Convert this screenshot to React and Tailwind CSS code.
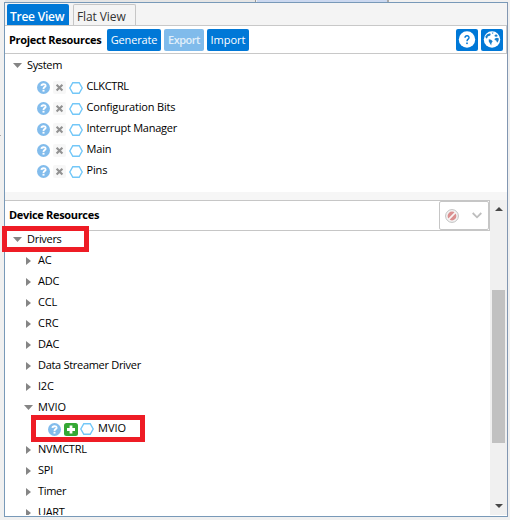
import React from "react";

function Help() {
  return (
    <svg className="shrink-0" width="13" height="13" viewBox="0 0 13 13">
      <circle cx="6.5" cy="6.5" r="6.5" fill="#82bcec" />
      <path d="M4.4 4.9C4.5 2.6 8.7 2.6 8.6 4.9C8.5 6.1 6.5 6.2 6.5 7.9" fill="none" stroke="#fff" strokeWidth="1.9" />
      <rect x="5.5" y="8.8" width="2" height="1.8" fill="#fff" />
    </svg>
  );
}

function Hexagon() {
  return (
    <svg className="shrink-0" width="14" height="12" viewBox="0 0 14 12">
      <path d="M3.8 .7H10.2L13.2 6L10.2 11.3H3.8L.8 6Z" fill="#fff" stroke="#72c7f8" strokeWidth="1.4" />
    </svg>
  );
}

function Remove() {
  return (
    <svg className="shrink-0" width="13" height="13" viewBox="0 0 13 13">
      <rect width="13" height="13" rx="2" fill="#f7f7f7" />
      <path d="M3.6 3.8L9.4 9.6M9.4 3.8L3.6 9.6" stroke="#929292" strokeWidth="2.1" />
    </svg>
  );
}

function Add() {
  return (
    <svg className="shrink-0" width="14" height="13" viewBox="0 0 14 13">
      <rect width="14" height="13" rx="2.5" fill="#34a834" />
      <path d="M7 2.5V10.5M3 6.5H11" stroke="#fff" strokeWidth="2.8" />
    </svg>
  );
}

function Arrow({ open }) {
  return open ? (
    <svg className="shrink-0" width="9" height="5" viewBox="0 0 9 5"><path d="M0 0H9L4.5 5Z" fill="#858585" /></svg>
  ) : (
    <svg className="shrink-0" width="5" height="8" viewBox="0 0 5 8"><path d="M0 0L5 4L0 8Z" fill="#858585" /></svg>
  );
}

const systemItems = [
  ["CLKCTRL", "tracking-[-0.4px]"],
  ["Configuration Bits", "tracking-[-0.18px]"],
  ["Interrupt Manager", "tracking-[-0.25px]"],
  ["Main", "tracking-[-0.15px]"],
  ["Pins", "tracking-[-0.15px]"],
];

const drivers = [
  ["AC", "tracking-[-0.2px]"],
  ["ADC", "tracking-[-0.2px]"],
  ["CCL", "tracking-[-0.2px]"],
  ["CRC", "tracking-normal"],
  ["DAC", "tracking-[-0.2px]"],
  ["Data Streamer Driver", "tracking-[-0.3px]"],
  ["I2C", "tracking-[-0.2px]"],
];

const moreDrivers = [
  ["NVMCTRL", "tracking-[-0.2px]"],
  ["SPI", "tracking-[-0.2px]"],
  ["Timer", "tracking-[-0.3px]"],
  ["UART", "tracking-[-0.3px]"],
];

function DriverRow({ label, spacing }) {
  return (
    <div className="flex h-[21px] items-center pl-[21px]">
      <Arrow />
      <span className={"ml-[7px] pb-[2px] leading-[19px] " + spacing}>{label}</span>
    </div>
  );
}

export default function App() {
  return (
    <div className="h-[524px] w-[515px] overflow-hidden bg-white font-['Open_Sans','Noto_Sans',sans-serif] text-[11px] leading-[21px] text-black whitespace-nowrap">
      <div className="relative flex h-[520px] w-[510px] flex-col bg-[#f0f0f0]">
        <div className="flex h-[2px] shrink-0 pl-[5px]">
          <div className="w-[251px] border-r border-[#999] bg-[#e5e5e5]" />
          <div className="ml-px w-[132px] border-r-2 border-[#aaa] bg-[#cbd8f0]" />
        </div>
        <div className="ml-1 flex h-[515px] w-[504px] flex-col overflow-hidden border border-r-[#8297b2] border-[#7899b8] bg-white">
          <div className="flex h-[22px] shrink-0 items-end bg-[#f4f4f4] pl-[2px] text-[12px]">
            <div className="h-[21px] w-[62px] rounded-t-[2px] bg-[#0078d7] pl-[3px] leading-[25px] font-semibold tracking-[-0.25px] text-white">Tree View</div>
            <div className="ml-1 h-[21px] w-[63px] rounded-t-[2px] border border-b-0 border-[#c6c6c6] pl-[3px] leading-[23px] tracking-[-0.1px] text-[#333]">Flat View</div>
          </div>
          <div className="flex h-[29px] w-[502px] shrink-0 items-center border border-l-0 border-[#c8c8c8] pl-1">
            <span className="w-[98px] font-bold tracking-[-0.32px]">Project Resources</span>
            <div className="h-[22px] w-[54px] rounded-[2px] bg-[#0078d7] text-center text-[11px] leading-[22px] tracking-[-0.15px] text-white">Generate</div>
            <div className="ml-[3px] h-[22px] w-[40px] rounded-[2px] bg-[#80bbeb] text-center text-[11px] leading-[22px] font-semibold tracking-[-0.5px] text-[#e0effa]">Export</div>
            <div className="ml-[3px] h-[22px] w-[42px] rounded-[2px] bg-[#0078d7] text-center text-[11px] leading-[22px] text-white">Import</div>
            <div className="ml-auto flex gap-[3px] pr-[3px]">
              <div className="flex size-[22px] items-center justify-center rounded-[2px] bg-[#0078d7]">
                <svg width="18" height="18" viewBox="0 0 18 18">
                  <circle cx="9" cy="8.5" r="8.2" fill="#fff" />
                  <path d="M7 6.7C7.1 4 11.2 4.1 11 6.7C10.9 8.2 9 8.2 9 10.3" fill="none" stroke="#0078d7" strokeWidth="1.4" />
                  <rect x="8.2" y="11.5" width="1.6" height="1.6" fill="#0078d7" />
                </svg>
              </div>
              <div className="flex size-[22px] items-center justify-center rounded-[2px] bg-[#0078d7]">
                <svg width="18" height="18" viewBox="0 0 18 18">
                  <circle cx="9" cy="8.5" r="8.2" fill="#fff" />
                  <path d="M2.3 5.6L4.2 3.2L7.2 2.2L7.7 3.9L6.3 5L4.9 5.2L4.3 7.1L3.1 7.4ZM8.7 1.5L10.6 1.8L9.7 3.1ZM5.8 8.3L8.1 8.8L9.7 10.2L8.5 12.1L8.2 14.4L7 12.5L5.8 10.5ZM11.5 4.2L13.2 3.2L14.9 4.9L13.4 5.8L11.8 5.5ZM11.8 7.4L14 6.7L15.9 7.6L15.4 9.9L14.1 11.8L13.2 9.6L11.6 8.9Z" fill="#187fcb" />
                </svg>
              </div>
            </div>
          </div>
          <div className="h-[138px] shrink-0 pt-px">
            <div className="flex h-[21px] items-center pl-2">
              <Arrow open /><span className="ml-[5px] pb-[2px] leading-[19px] tracking-[-0.35px]">System</span>
            </div>
            {systemItems.map(([label, spacing]) => (
              <div key={label} className="flex h-[21px] items-center pl-8">
                <div className="flex items-center gap-[3px] pt-[2px]"><Help /><Remove /><Hexagon /></div>
                <span className={"ml-[3.5px] pb-[2px] leading-[19px] " + spacing}>{label}</span>
              </div>
            ))}
          </div>
          <div className="h-2 shrink-0 bg-[#f6f6f6]" />
          <div className="flex h-[315px] shrink-0">
            <div className="w-[485px] overflow-hidden">
              <div className="flex h-[31px] items-center justify-between border border-l-0 border-[#c6c6c6] pl-1">
                <span className="pb-[2px] leading-[19px] font-bold tracking-[-0.32px]">Device Resources</span>
                <div className="flex h-[29px] w-[50px] items-center rounded-[2px] border border-[#c6c6c6] pl-[5px]">
                  <svg width="14" height="14" viewBox="0 0 14 14">
                    <circle cx="7" cy="7" r="6.4" fill="#f4f4f4" stroke="#bbb" strokeWidth=".9" />
                    <circle cx="7" cy="7" r="4.4" fill="#da9090" />
                    <path d="M3.7 10.3L10.3 3.7" stroke="#f8f4f4" strokeWidth="1.7" />
                  </svg>
                  <svg className="ml-[13px]" width="10" height="7" viewBox="0 0 10 7"><path d="M.7 1L5 5.3L9.3 1" fill="none" stroke="#bebebe" strokeWidth="1.8" /></svg>
                </div>
              </div>
              <div className="-mt-[2px]">
                <div className="flex h-[21px] items-center pl-2"><Arrow open /><span className="ml-[5px] pb-[2px] leading-[19px] tracking-[-0.3px]">Drivers</span></div>
                {drivers.map(([label, spacing]) => <DriverRow key={label} label={label} spacing={spacing} />)}
                <div className="flex h-[21px] items-center pl-[19px]"><Arrow open /><span className="ml-[5px] pb-[2px] leading-[19px] tracking-normal">MVIO</span></div>
                <div className="flex h-[21px] items-center pl-[43px]">
                  <div className="flex items-center gap-[2.5px] pt-px"><Help /><Add /><Hexagon /></div>
                  <span className="ml-1 pb-[2px] leading-[19px] tracking-normal">MVIO</span>
                </div>
                {moreDrivers.map(([label, spacing]) => <DriverRow key={label} label={label} spacing={spacing} />)}
              </div>
            </div>
            <div className="flex w-[17px] flex-col items-center bg-[#f0f0f0]">
              <svg className="mt-[7px] shrink-0" width="8" height="4" viewBox="0 0 8 4"><path d="M0 4L4 0L8 4Z" fill="#484848" /></svg>
              <div className="mt-[79px] h-[153px] w-[13px] shrink-0 bg-[#c1c1c1]" />
              <svg className="mt-[61px] shrink-0" width="8" height="4" viewBox="0 0 8 4"><path d="M0 0L4 4L8 0Z" fill="#484848" /></svg>
            </div>
          </div>
        </div>
        <div className="absolute top-[226px] left-[2px] h-[26px] w-[87px] border-[5px] border-[#ee1c25]" />
        <div className="absolute top-[415px] left-[31px] h-[27px] w-[114px] border-[5px] border-[#ee1c25]" />
        <div className="absolute top-[135px] left-0 h-px w-px bg-[#aaa]" />
      </div>
    </div>
  );
}
